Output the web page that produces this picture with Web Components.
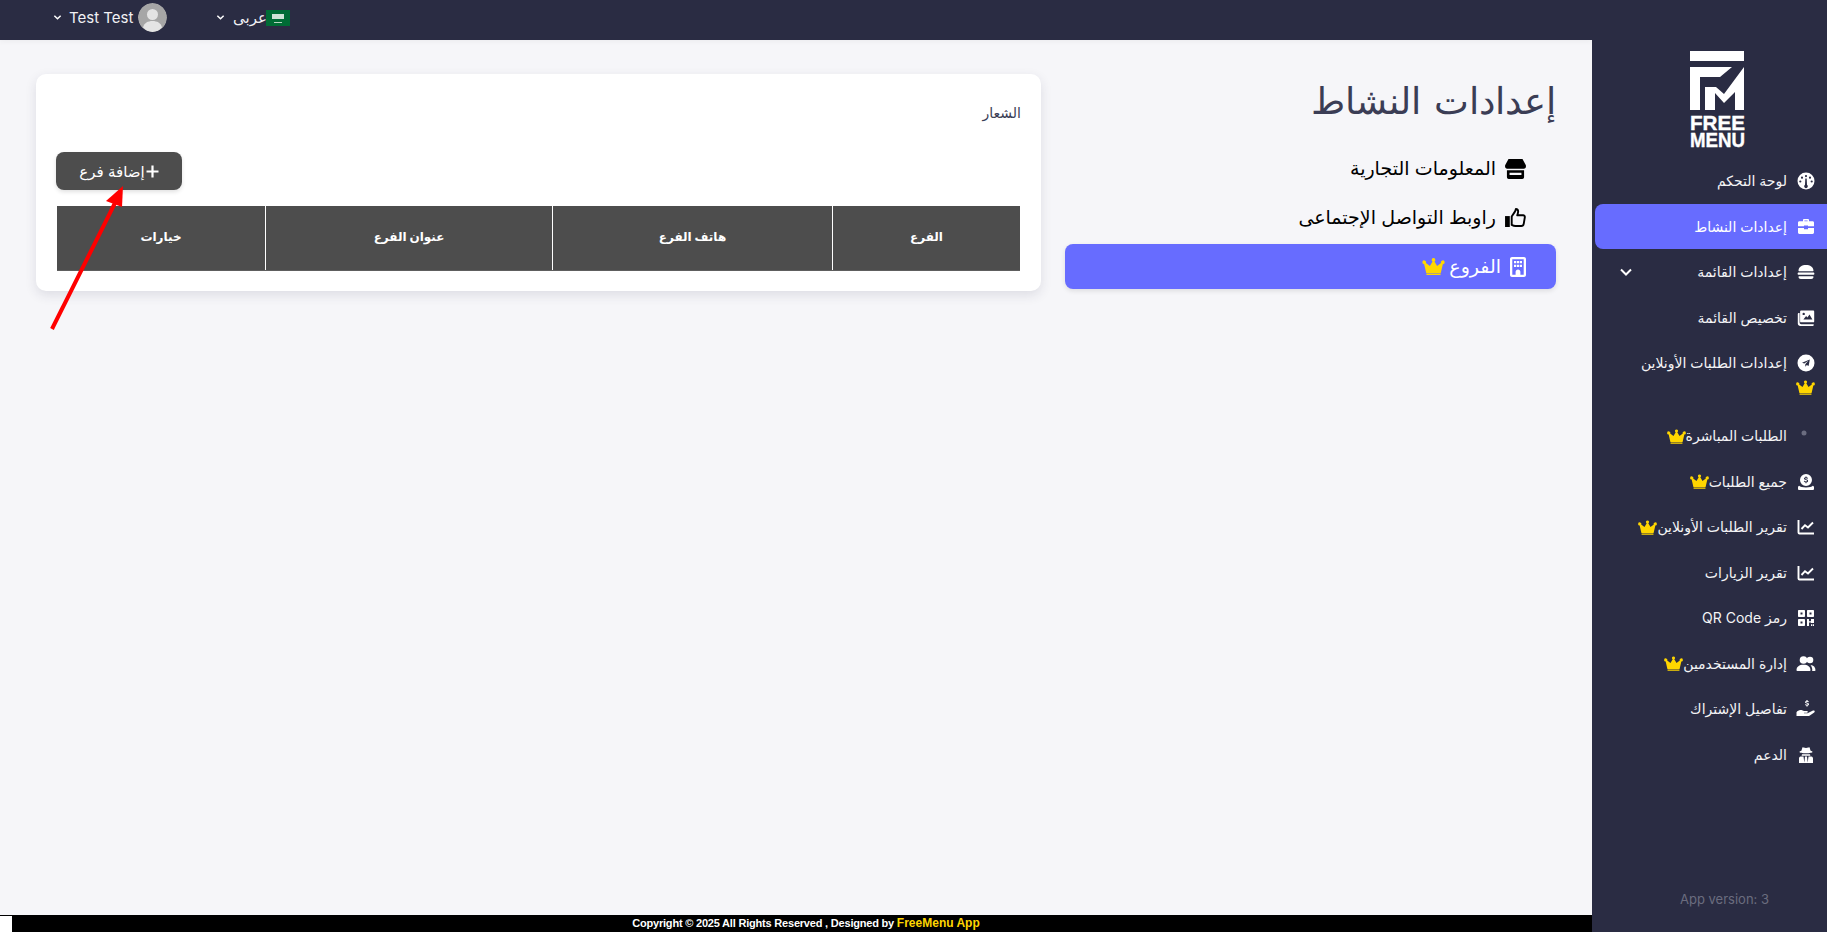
<!DOCTYPE html>
<html lang="ar">
<head>
<meta charset="utf-8">
<title>FreeMenu</title>
<style>
    html, body { margin: 0; height: 100%; overflow: hidden; }
    body { font-family: Inter, "Noto Sans", "DejaVu Sans", sans-serif; background: #f6f6f9; }
</style>
</head>
<body>
<fm-app>
    <fm-header slot="header"></fm-header>
    <fm-sidebar slot="sidebar">
        <fm-nav-item label="لوحة التحكم"><svg viewBox="0 0 18 18"><path fill="#fff" fill-rule="evenodd" d="M9 .5a8.500 8.500 0 1 0 0 17 8.500 8.500 0 0 0 0-17zM9 3a1.100 1.100 0 1 1 0 2.200A1.100 1.100 0 0 1 9 3zM5 4.600a1.100 1.100 0 1 1 0 2.200 1.100 1.100 0 0 1 0-2.200zm8 0a1.100 1.100 0 1 1 0 2.200 1.100 1.100 0 0 1 0-2.200zM3.300 8.400a1.100 1.100 0 1 1 0 2.200 1.100 1.100 0 0 1 0-2.200zm11.400 0a1.100 1.100 0 1 1 0 2.200 1.100 1.100 0 0 1 0-2.200zM8.300 6.500h1.400l.3 6.200a1.800 1.800 0 1 1-2 0z"/></svg></fm-nav-item>
        <fm-nav-item label="إعدادات النشاط" active><svg viewBox="0 0 18 18"><path fill="#fff" d="M6 3.300V2.100C6 1.500 6.500 1 7.100 1h3.800c.6 0 1.100.5 1.100 1.100v1.200h3.600c.8 0 1.400.6 1.400 1.400v3.600H11v-.8H7v.8H1V4.700c0-.8.6-1.400 1.400-1.400zm1.400 0h3.200V2.400H7.400zM1 10h6v1.300h4V10h6v4.600c0 .8-.6 1.400-1.400 1.400H2.400C1.600 16 1 15.400 1 14.600z"/></svg></fm-nav-item>
        <fm-nav-item label="إعدادات القائمة" chevron><svg viewBox="0 0 18 18"><path fill="#fff" d="M1.500 7.700C1.500 4 5 2 9 2s7.500 2 7.500 5.700c0 .3-.2.5-.5.5H2c-.3 0-.5-.2-.5-.5zM1.800 9.600h14.400c.7 0 1.200.5 1.200 1.100s-.5 1.100-1.200 1.100H1.800c-.7 0-1.200-.5-1.200-1.100s.5-1.100 1.200-1.100zM2 13.200h14c.3 0 .5.200.5.500 0 1.300-1 2.300-2.300 2.300H3.800c-1.300 0-2.300-1-2.300-2.300 0-.3.200-.5.500-.5z"/></svg></fm-nav-item>
        <fm-nav-item label="تخصيص القائمة"><svg viewBox="0 0 18 18"><path fill="#fff" fill-rule="evenodd" d="M4 1.500h12.300c.5 0 .9.400.9.900v10c0 .5-.4.900-.9.900H4c-.5 0-.9-.4-.9-.9v-10c0-.5.400-.9.900-.9zm2.400 9h9l-2.900-5-2.100 3-1.300-1.400zM6.700 3.700a1.200 1.200 0 1 0 0 2.400 1.200 1.200 0 0 0 0-2.400z"/><path fill="#fff" d="M1.900 4h.7v9.500c0 1 .7 1.700 1.700 1.700h12.400v.7c0 .6-.5 1.100-1.100 1.100H3.300C1.900 17 .8 15.900.8 14.500V5.100C.8 4.500 1.300 4 1.900 4z"/></svg></fm-nav-item>
        <fm-nav-item label="إعدادات الطلبات الأونلاين" crown-below><svg viewBox="0 0 18 18"><path fill="#fff" fill-rule="evenodd" d="M9 .5a8.500 8.500 0 1 0 0 17 8.500 8.500 0 0 0 0-17zm3.800 5L5 8.700l2.300.9 4-2.800-3 3.400v2.500l1.500-1.800 1.800 1.200z"/></svg></fm-nav-item>
        <fm-nav-item label="الطلبات المباشرة" crown><svg viewBox="0 0 18 18"><circle cx="7" cy="6" r="2.500" fill="#6b6d80"/></svg></fm-nav-item>
        <fm-nav-item label="جميع الطلبات" crown><svg viewBox="0 0 18 18"><path fill="#fff" fill-rule="evenodd" d="M9 1a6 6 0 1 0 0 12A6 6 0 0 0 9 1zm.5 2.500v.8c.8.100 1.300.5 1.500 1.100l-1 .3c-.1-.3-.4-.5-1-.5s-.9.200-.9.500.3.400 1 .6c1.200.2 2 .6 2 1.600 0 .8-.6 1.300-1.600 1.400v.9h-1v-.9c-.9-.1-1.500-.6-1.700-1.300l1.100-.3c.1.400.5.700 1.100.7s1-.2 1-.6-.4-.5-1.200-.7c-1-.2-1.800-.6-1.800-1.500 0-.8.600-1.300 1.500-1.400v-.8z"/><path fill="#fff" d="M2.200 12.700c.9 1 3.400 1.700 6.800 1.700s5.900-.7 6.800-1.700c.7.300 1.200.8 1.200 1.500v1.900c0 .5-.4.900-.9.900H1.900c-.5 0-.9-.4-.9-.9v-1.900c0-.7.500-1.200 1.200-1.500z"/></svg></fm-nav-item>
        <fm-nav-item label="تقرير الطلبات الأونلاين" crown><svg viewBox="0 0 18 18"><path fill="none" stroke="#fff" stroke-width="1.900" d="M1.500 2v12.500c0 .6.400 1 1 1H17"/><path fill="none" stroke="#fff" stroke-width="1.900" d="M4.500 11l3.500-3.800 3 2.300 5-5"/></svg></fm-nav-item>
        <fm-nav-item label="تقرير الزيارات"><svg viewBox="0 0 18 18"><path fill="none" stroke="#fff" stroke-width="1.900" d="M1.500 2v12.500c0 .6.400 1 1 1H17"/><path fill="none" stroke="#fff" stroke-width="1.900" d="M4.500 11l3.500-3.800 3 2.300 5-5"/></svg></fm-nav-item>
        <fm-nav-item label="رمز QR Code"><svg viewBox="0 0 18 18"><path fill="#fff" fill-rule="evenodd" d="M2 1h5c.6 0 1 .4 1 1v5c0 .6-.4 1-1 1H2c-.6 0-1-.4-1-1V2c0-.6.400-1 1-1zm1.500 2.500v2h2v-2zM11 1h5c.6 0 1 .4 1 1v5c0 .6-.4 1-1 1h-5c-.6 0-1-.4-1-1V2c0-.6.400-1 1-1zm1.500 2.500v2h2v-2zM2 10h5c.6 0 1 .4 1 1v5c0 .6-.4 1-1 1H2c-.6 0-1-.4-1-1v-5c0-.6.400-1 1-1zm1.500 2.500v2h2v-2zM10 10h2v2.200h2V10h3v4h-3v-.6h-2V17h-2zm4 5.300h1.200V17H14zm1.800 0H17V17h-1.200z"/></svg></fm-nav-item>
        <fm-nav-item label="إدارة المستخدمين" crown><svg viewBox="0 0 20 18" style="width:20px"><circle cx="7.500" cy="5" r="3.800" fill="#fff"/><circle cx="14" cy="5" r="3.300" fill="#fff"/><path fill="#fff" d="M.5 15.200c0-3.500 2.700-5.400 7-5.400s7 1.900 7 5.400c0 .5-.3.800-.8.800H1.300c-.5 0-.8-.3-.8-.8zM15 16h3.700c.5 0 .8-.3.800-.8 0-3-1.900-5-5-5.200 1 1.200 1.800 3 1.800 5 0 .4-.1.700-.3 1z"/></svg></fm-nav-item>
        <fm-nav-item label="تفاصيل الإشتراك"><svg viewBox="0 0 20 18" style="width:20px"><path fill="#fff" d="M10.400 0h1.200v.9c.7.100 1.200.4 1.400.9l-1 .4c-.1-.2-.4-.4-1-.4s-.8.200-.8.400.2.300.9.500c1.100.2 1.900.5 1.900 1.500 0 .7-.5 1.200-1.400 1.300v1h-1.200V5.600c-.8-.1-1.300-.5-1.500-1.100l1.100-.3c.1.300.4.500.9.500.6 0 .9-.2.900-.5s-.3-.4-1-.6C9.700 3.400 9 3 9 2.100c0-.7.500-1.100 1.400-1.200z"/><path fill="#fff" d="M.5 12.300c1-1.700 3.200-2.700 5-2.200l2.500.8h2.700c.7 0 1.100.4 1.100.9s-.4 1-1.100 1H8v.5h3.500l5.500-2.700c.6-.3 1.300-.2 1.600.3s.2 1-.4 1.500l-4.700 3.300c-.4.300-.8.400-1.300.4H.5z"/></svg></fm-nav-item>
        <fm-nav-item label="الدعم"><svg viewBox="0 0 18 18"><path fill="#fff" fill-rule="evenodd" d="M5.500 1.200 9 2l3.500-.8 1.100 3.600c1 .3 1.900.7 1.900 1.200 0 .6-2.900 1.300-6.500 1.300S2.500 6.600 2.500 6c0-.5.900-.9 1.900-1.200zM5 8.300h8l.4 1.400H4.600zM3.500 10.500h3l.9 6.500H2v-4.500c0-1 .6-1.700 1.500-2zm11 0c.9.300 1.500 1 1.500 2V17h-5.400l.9-6.500zM8 10.500h2l.7 6.500H7.300z"/></svg></fm-nav-item>
    </fm-sidebar>

    <fm-card slot="card">
        <span slot="label">الشعار</span>
        <fm-button slot="action">إضافة فرع</fm-button>
        <fm-branch-table></fm-branch-table>
    </fm-card>

    <fm-settings slot="settings" heading="إعدادات النشاط">
        <fm-tab label="المعلومات التجارية"><svg viewBox="0 0 24 20" style="width:21px;height:20px" preserveAspectRatio="none"><path fill="#000" fill-rule="evenodd" d="M4 0h16l3.700 6c.8 1.700-.3 3.700-2.200 3.800H2.500C.6 9.700-.5 7.700.3 6zM2.200 11.200h19.600V18c0 1.100-.9 2-2 2H4.200c-1.100 0-2-.9-2-2zm3 2.500V16h13.600v-2.300z"/></svg></fm-tab>
        <fm-tab label="راوبط التواصل الإجتماعى"><svg viewBox="0 0 22 20" style="width:21px;height:19px"><path fill="#000" d="M0 8.500h5V20H0z"/><path fill="none" stroke="#000" stroke-width="2" stroke-linejoin="round" d="M7 9l3.400-5.200c.5-1 .8-1.800 1-2.800.8 0 2.400.5 2.400 2.800 0 1.500-.5 2.700-1 3.900h6.200c1.200 0 2 1 1.800 2.200l-1.100 6.600c-.2 1.200-1 2.500-2.700 2.500H11c-1.500 0-2.500-.4-4-1.200z"/></svg></fm-tab>
        <fm-tab label="الفروع" active crown><svg viewBox="0 0 16 20" style="width:16px;height:20px"><path fill="#fff" fill-rule="evenodd" d="M2 0h12c1.100 0 2 .9 2 2v16c0 1.100-.9 2-2 2H2c-1.100 0-2-.9-2-2V2C0 .9.900 0 2 0zm.3 2.200v15.600h3.300v-3c0-1.300 1-2.300 2.400-2.300s2.400 1 2.400 2.300v3h3.300V2.200zM4 4h2.300v2.300H4zm3 0h2v2.300H7zm2.700 0H12v2.300H9.700zM4 7.800h2.300v2.300H4zm3 0h2v2.300H7zm2.700 0H12v2.300H9.700z"/></svg></fm-tab>
    </fm-settings>

    <fm-footer slot="footer"></fm-footer>
</fm-app>

<script>
const crownSvg = `<svg class="crown" viewBox="0 0 24 18"><path fill="#ffd600" d="M12 0a2 2 0 0 1 1 3.700l2.800 4.800L20 5.300a2 2 0 1 1 1.900 1.200L19.700 16H4.300L2.100 6.500A2 2 0 1 1 4 5.300l4.200 3.200L11 3.700A2 2 0 0 1 12 0zM4.500 16.500h15v1.500h-15z"/></svg>`;

class FmApp extends HTMLElement {
    constructor() {
        super();
        this.attachShadow({ mode: 'open' });
        this.shadowRoot.innerHTML = `
            <style>
                :host { display: grid; grid-template-columns: 1592px 235px; height: 932px; position: relative; direction: ltr; }
                .left { display: flex; flex-direction: column; height: 932px; min-width: 0; }
                .content { flex: 1; display: flex; gap: 24px; padding: 34px 36px 0; align-items: flex-start; min-height: 0; }
                ::slotted([slot=card]) { width: 1005px; }
                ::slotted([slot=settings]) { flex: 1; }
                .arrow { position: absolute; left: 40px; top: 175px; width: 100px; height: 170px; pointer-events: none; }
            </style>
            <div class="left">
                <slot name="header"></slot>
                <div class="content">
                    <slot name="card"></slot>
                    <slot name="settings"></slot>
                </div>
                <slot name="footer"></slot>
            </div>
            <slot name="sidebar"></slot>
            <svg class="arrow" viewBox="0 0 100 170">
                <path d="M12 154 L75 28" stroke="#ff0000" stroke-width="4" fill="none"/>
                <path d="M83 11 L66 26 L82 32 z" fill="#ff0000"/>
            </svg>`;
    }
}

class FmHeader extends HTMLElement {
    constructor() {
        super();
        this.attachShadow({ mode: 'open' });
        this.shadowRoot.innerHTML = `
            <style>
                :host { display: flex; align-items: center; height: 40px; background: #2a2c43; color: #f1f1f4; padding: 0 0 6px 53px; font-size: 15px; box-shadow: 0 2px 5px rgba(0,0,0,.04); flex: none; box-sizing: border-box; }
                .user, .lang { display: flex; align-items: center; }
                .user { width: 163px; }
                .chev { width: 9px; height: 9px; margin-right: 7px; flex: none; }
                .avatar { width: 29px; height: 29px; margin-left: 5px; border-radius: 50%; }
                .lang span { margin-left: 1px; margin-right: -1px; }
                .flag { width: 24px; height: 16px; flex: none; margin-top: 2px; }
            </style>
            <div class="user">
                <svg class="chev" viewBox="0 0 10 10"><path d="M1.500 3 5 6.500 8.500 3" fill="none" stroke="#fff" stroke-width="1.600"/></svg>
                <span>Test Test</span>
                <svg class="avatar" viewBox="0 0 29 29"><circle cx="14.500" cy="14.500" r="14.500" fill="#a6a6a6"/><circle cx="14.500" cy="11.500" r="5.500" fill="#e4e4e4"/><path d="M5 24.500c1-4.500 5-6.500 9.500-6.500s8.500 2 9.500 6.500A14.500 14.500 0 0 1 14.500 29 14.500 14.500 0 0 1 5 24.500z" fill="#e4e4e4"/></svg>
            </div>
            <div class="lang">
                <svg class="chev" viewBox="0 0 10 10"><path d="M1.500 3 5 6.500 8.500 3" fill="none" stroke="#fff" stroke-width="1.600"/></svg>
                <span lang="ar">عربى</span>
                <svg class="flag" viewBox="0 0 24 16"><rect width="24" height="16" fill="#006c35"/><rect x="6" y="4" width="12" height="5" fill="#cfe3d6"/><rect x="8" y="12" width="8" height="1" fill="#b7d4c2"/></svg>
            </div>`;
    }
}

class FmSidebar extends HTMLElement {
    constructor() {
        super();
        this.attachShadow({ mode: 'open' });
        this.shadowRoot.innerHTML = `
            <style>
                :host { display: flex; flex-direction: column; background: #2a2c43; height: 932px; padding-left: 3px; box-sizing: border-box; position: relative; direction: rtl; }
                .logo { height: 158px; flex: none; display: flex; justify-content: center; padding: 50px 0 0 12px; box-sizing: border-box; direction: ltr; }
                .mark { width: 55px; height: 98px; display: block; }
                .mark text { font-family: "Liberation Sans", sans-serif; font-size: 20.800px; font-weight: 700; fill: #fff; stroke: #fff; stroke-width: .4px; }
                .version { position: absolute; left: 88px; top: 891px; color: #6a6c7f; font-size: 13px; direction: ltr; }
            </style>
            <div class="logo">
                <svg class="mark" viewBox="0 0 55 98">
                    <path fill="#fff" d="M0 1h54v10H0zM0 17h42L30 27H10v33H0z"/>
                    <path fill="#fff" d="M54 17v43H45V42L34 53 25 43v17H15V37h11l8 7z"/>
                    <text x="0" y="80" textLength="55" lengthAdjust="spacingAndGlyphs">FREE</text>
                    <text x="0" y="97" textLength="55" lengthAdjust="spacingAndGlyphs">MENU</text>
                </svg>
            </div>
            <slot></slot>
            <div class="version">App version: 3</div>`;
    }
}

class FmNavItem extends HTMLElement {
    constructor() {
        super();
        this.attachShadow({ mode: 'open' });
        const label = this.getAttribute('label');
        const crown = this.hasAttribute('crown') ? crownSvg : '';
        const below = this.hasAttribute('crown-below') ? `<div class="below">${crownSvg}</div>` : '';
        const chevron = this.hasAttribute('chevron')
            ? `<svg class="chev" viewBox="0 0 14 14"><path d="M2 4.500 7 9.500 12 4.500" fill="none" stroke="#fff" stroke-width="2"/></svg>` : '';
        this.shadowRoot.innerHTML = `
            <style>
                :host { display: block; min-height: 45.500px; color: #f4f4f6; font-size: 14px; line-height: 24px; box-sizing: border-box; padding: 11px 12px 10px 0; border-radius: 8px 0 0 8px; }
                :host([active]) { background: #676cff; color: #fff; }
                :host([crown-below]) { padding-bottom: 14px; }
                .row { display: flex; align-items: center; height: 24px; }
                .icon { width: 18px; height: 18px; margin-left: 10px; flex: none; display: flex; justify-content: center; }
                ::slotted(svg) { width: 18px; height: 18px; flex: none; }
                .crown { width: 19px; height: 15px; flex: none; }
                .below { height: 24px; display: flex; align-items: center; }
                .chev { width: 14px; height: 14px; margin-right: auto; margin-left: 24px; }
            </style>
            <div class="row"><span class="icon"><slot></slot></span><span>${label}</span>${crown}${chevron}</div>
            ${below}`;
    }
}

class FmCard extends HTMLElement {
    constructor() {
        super();
        this.attachShadow({ mode: 'open' });
        this.shadowRoot.innerHTML = `
            <style>
                :host { display: block; background: #fff; border-radius: 10px; box-shadow: 0 4px 12px rgba(40,40,70,.12); padding: 28px 20px 20px 20px; box-sizing: border-box; height: 217px; direction: rtl; color: #3b3d55; }
                .label { font-size: 14px; line-height: 22px; height: 50px; }
                .action { height: 54px; }
            </style>
            <div class="label"><slot name="label"></slot></div>
            <div class="action"><slot name="action"></slot></div>
            <slot></slot>`;
    }
}

class FmButton extends HTMLElement {
    constructor() {
        super();
        this.attachShadow({ mode: 'open' });
        this.shadowRoot.innerHTML = `
            <style>
                :host { display: inline-flex; align-items: center; justify-content: center; gap: 1px; width: 126px; height: 38px; background: #4d4d4d; color: #fff; border-radius: 8px; font-size: 15px; box-shadow: 0 2px 4px rgba(0,0,0,.12); float: left; }
                svg { width: 13px; height: 13px; }
            </style>
            <svg viewBox="0 0 13 13"><path d="M6.500 .5v12M.5 6.500h12" stroke="#fff" stroke-width="2.200"/></svg>
            <slot></slot>`;
    }
}

class FmBranchTable extends HTMLElement {
    constructor() {
        super();
        this.attachShadow({ mode: 'open' });
        const cols = [['الفرع', 188], ['هاتف الفرع', 280], ['عنوان الفرع', 287], ['خيارات', 208]];
        this.shadowRoot.innerHTML = `
            <style>
                :host { display: flex; height: 65px; margin: 0 1px; background: #4d4d4d; border-bottom: 1px solid #5e5e5e; box-sizing: border-box; }
                div { display: flex; align-items: center; justify-content: center; color: #fff; font-size: 12px; font-weight: 700; box-sizing: border-box; border-left: 1px solid #fff; padding-bottom: 3px; }
                div:last-child { border-left: 0; }
            </style>
            ${cols.map(c => `<div style="width:${c[1]}px">${c[0]}</div>`).join('')}`;
    }
}

class FmSettings extends HTMLElement {
    constructor() {
        super();
        this.attachShadow({ mode: 'open' });
        this.shadowRoot.innerHTML = `
            <style>
                :host { display: block; direction: rtl; }
                h1 { margin: 0; font-size: 37px; font-weight: 300; line-height: 54px; color: #3b3d55; height: 72px; word-spacing: 3px; }
            </style>
            <h1>${this.getAttribute('heading')}</h1>
            <slot></slot>`;
    }
}

class FmTab extends HTMLElement {
    constructor() {
        super();
        this.attachShadow({ mode: 'open' });
        const crown = this.hasAttribute('crown') ? crownSvg : '';
        this.shadowRoot.innerHTML = `
            <style>
                :host { display: flex; align-items: center; height: 45px; margin-bottom: 4px; padding-right: 30px; font-size: 19px; color: #000; border-radius: 8px; box-sizing: border-box; gap: 9px; }
                :host([active]) { background: #676cff; color: #fff; box-shadow: 0 2px 5px rgba(0,0,0,.1); }
                ::slotted(svg) { flex: none; }
                .crown { width: 23px; height: 17px; margin-right: -5px; }
            </style>
            <slot></slot><span>${this.getAttribute('label')}</span>${crown}`;
    }
}

class FmFooter extends HTMLElement {
    constructor() {
        super();
        this.attachShadow({ mode: 'open' });
        this.shadowRoot.innerHTML = `
            <style>
                :host { display: flex; height: 17px; flex: none; background: #000; color: #fff; font: 700 11px/17px "Liberation Sans", sans-serif; letter-spacing: -.2px; }
                .stub { width: 12px; margin-top: 1px; background: #fff; flex: none; }
                .text { flex: 1; text-align: center; padding-left: 8px; }
                b { color: #ffd600; font-size: 12px; letter-spacing: 0; }
            </style>
            <span class="stub"></span>
            <span class="text">Copyright © 2025 All Rights Reserved , Designed by <b>FreeMenu App</b></span>`;
    }
}

customElements.define('fm-app', FmApp);
customElements.define('fm-header', FmHeader);
customElements.define('fm-sidebar', FmSidebar);
customElements.define('fm-nav-item', FmNavItem);
customElements.define('fm-card', FmCard);
customElements.define('fm-button', FmButton);
customElements.define('fm-branch-table', FmBranchTable);
customElements.define('fm-settings', FmSettings);
customElements.define('fm-tab', FmTab);
customElements.define('fm-footer', FmFooter);
</script>
</body>
</html>
